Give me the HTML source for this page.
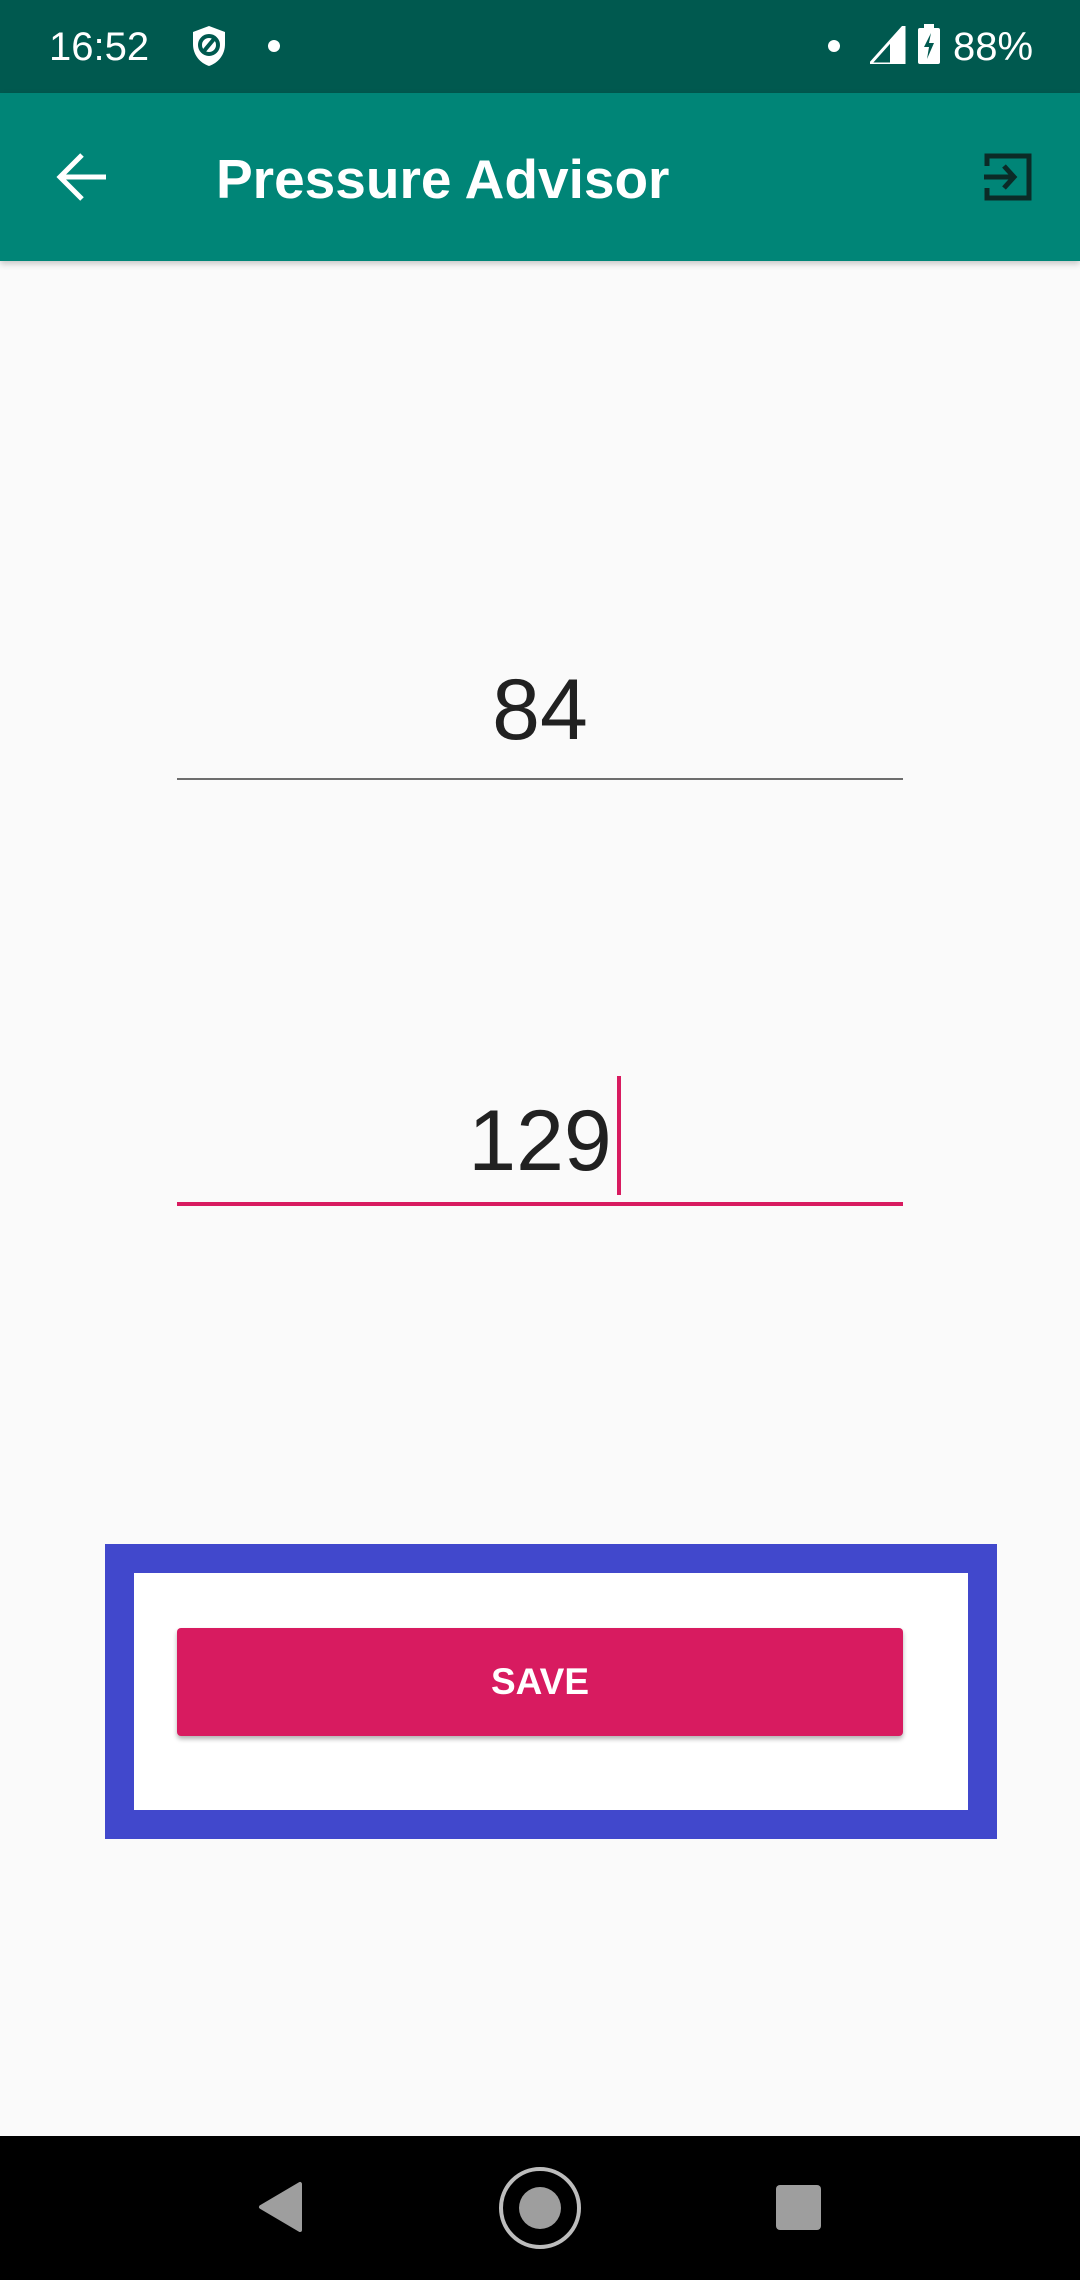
<!DOCTYPE html>
<html><head><meta charset="utf-8"><style>
*{margin:0;padding:0;box-sizing:border-box}
body{width:1080px;height:2280px;background:#fafafa;position:relative;overflow:hidden;font-family:"Liberation Sans",sans-serif}
.abs{position:absolute}
</style></head><body>
<div class="abs" style="left:0;top:0;width:1080px;height:93px;background:#00594f"></div>
<div class="abs" style="left:49px;top:22px;color:#fff;font-size:40px;line-height:50px">16:52</div>
<svg class="abs" style="left:190px;top:24px" width="38" height="44" viewBox="0 0 38 44"><path d="M19 2 L35 8 V20 C35 31 28 39 19 42 C10 39 3 31 3 20 V8 Z" fill="#fff"/><circle cx="19" cy="21" r="9" fill="none" stroke="#00594f" stroke-width="4"/><path d="M14 27 L24 15" stroke="#00594f" stroke-width="4"/></svg>
<div class="abs" style="left:268px;top:40px;width:12px;height:12px;border-radius:6px;background:#fff"></div>
<div class="abs" style="left:828px;top:40px;width:12px;height:12px;border-radius:6px;background:#fff"></div>
<svg class="abs" style="left:870px;top:26px" width="36" height="38"><path d="M34 0 V38 H0 Z" fill="none" stroke="#fff" stroke-width="3"/><path d="M34 0 V38 H20 V14 Z" fill="#fff"/></svg>
<svg class="abs" style="left:918px;top:24px" width="22" height="40"><rect x="6" y="0" width="10" height="5" fill="#fff"/><rect x="0" y="4" width="22" height="36" rx="2" fill="#fff"/><path d="M13 9 L6 23 H11 L9 35 L16 19 H11 Z" fill="#00594f"/></svg>
<div class="abs" style="left:953px;top:22px;color:#fff;font-size:40px;line-height:50px">88%</div>
<div class="abs" style="left:0;top:93px;width:1080px;height:168px;background:#008577;box-shadow:0 3px 6px rgba(0,0,0,.2)"></div>
<svg class="abs" style="left:56px;top:152px" width="52" height="50" viewBox="0 0 52 50"><path d="M50 25 H6 M26 3 L4 25 L26 47" fill="none" stroke="#fff" stroke-width="5"/></svg>
<div class="abs" style="left:216px;top:144px;color:#fff;font-size:55px;font-weight:bold;line-height:70px">Pressure Advisor</div>
<svg class="abs" style="left:982px;top:152px" width="52" height="50" viewBox="0 0 52 50"><path d="M5 14 V4 H47 V46 H5 V36" fill="none" stroke="#0b2b27" stroke-width="5"/><path d="M2 25 H30 M22 14 L32 25 L22 36" fill="none" stroke="#0b2b27" stroke-width="5"/></svg>
<div class="abs" style="left:177px;top:655px;width:726px;text-align:center;font-size:86px;line-height:110px;color:#212121">84</div>
<div class="abs" style="left:177px;top:778px;width:726px;height:2px;background:#6d6d6d"></div>
<div class="abs" style="left:177px;top:1086px;width:726px;text-align:center;font-size:86px;line-height:110px;color:#212121">129</div>
<div class="abs" style="left:617px;top:1076px;width:4px;height:119px;background:#d81b60"></div>
<div class="abs" style="left:177px;top:1202px;width:726px;height:4px;background:#d81b60"></div>
<div class="abs" style="left:105px;top:1544px;width:892px;height:295px;border:29px solid #4148cc;background:#fff"></div>
<div class="abs" style="left:177px;top:1628px;width:726px;height:108px;background:#d81b60;border-radius:4px;box-shadow:0 3px 5px rgba(0,0,0,.3);color:#fff;font-weight:bold;font-size:37px;line-height:108px;text-align:center">SAVE</div>
<div class="abs" style="left:0;top:2136px;width:1080px;height:144px;background:#000"></div>
<svg class="abs" style="left:250px;top:2180px" width="60" height="56"><path d="M50 4 L50 50 L11 27 Z" fill="#9e9e9e" stroke="#9e9e9e" stroke-width="4" stroke-linejoin="round"/></svg>
<div class="abs" style="left:499px;top:2167px;width:82px;height:82px;border-radius:50%;border:4px solid #bdbdbd"></div>
<div class="abs" style="left:519px;top:2187px;width:42px;height:42px;border-radius:50%;background:#9e9e9e"></div>
<div class="abs" style="left:776px;top:2185px;width:45px;height:45px;border-radius:4px;background:#9e9e9e"></div>
</body></html>
